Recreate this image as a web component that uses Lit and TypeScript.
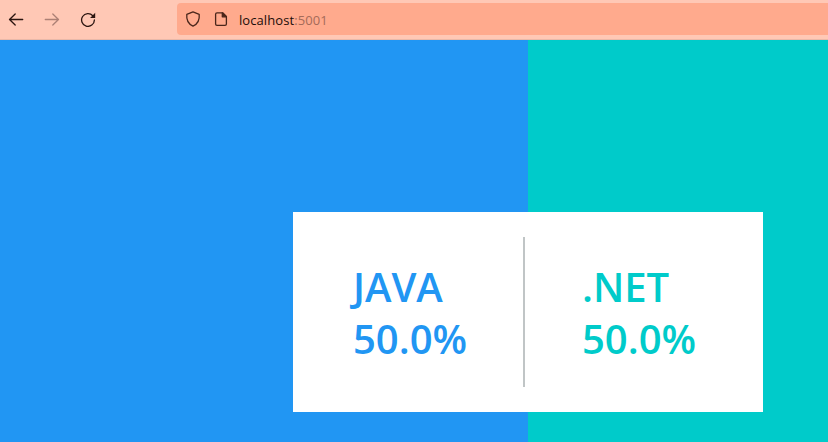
import { LitElement, html, css } from "lit";
import { customElement, property } from "lit/decorators.js";

@customElement("browser-bar")
class BrowserBar extends LitElement {
  static styles = css`
    :host {
      display: flex;
      height: 40px;
      box-sizing: border-box;
      padding: 3px 0 4px 8px;
      background: #ffc8b5;
      border-bottom: 1px solid #e9b8a8;
      align-items: stretch;
    }
    .nav {
      display: flex;
      align-items: center;
      gap: 20px;
      width: 169px;
      flex: none;
      color: #2b1510;
    }
    svg {
      width: 16px;
      height: 16px;
      display: block;
      flex: none;
      fill: none;
      stroke: currentColor;
      stroke-width: 1.3;
      stroke-linecap: round;
      stroke-linejoin: round;
    }
    .disabled {
      color: #ac8075;
    }
    .reload-tip {
      fill: currentColor;
      stroke: none;
    }
    .address {
      flex: 1;
      display: flex;
      align-items: center;
      padding-left: 8px;
      background: #ffaa8d;
      border-radius: 4px 0 0 4px;
      color: #4a261b;
    }
    .page {
      margin-left: 12px;
    }
    .url {
      margin-left: 10px;
      padding-top: 2px;
      font: 400 13px/20px "Open Sans", sans-serif;
      letter-spacing: 0.08px;
      color: #1c0d09;
      white-space: nowrap;
    }
    .port {
      color: #a56b59;
    }
  `;

  render() {
    return html`
      <div class="nav">
        <svg viewBox="0 0 16 16"><path d="M14.7 8.5H1.5M7.2 3L1.5 8.5L7.2 14" /></svg>
        <svg class="disabled" viewBox="0 0 16 16"><path d="M1.3 8.5H14.5M8.8 3L14.5 8.5L8.8 14" /></svg>
        <svg viewBox="0 0 16 16">
          <path d="M12.8 4.7A6.4 6.4 0 1 0 14.4 9" />
          <path class="reload-tip" d="M15.2 1.8V6.9H10.1Z" />
        </svg>
      </div>
      <div class="address">
        <svg viewBox="0 0 16 16">
          <path d="M8 .9L14.2 3.3C14.8 9 12.4 13.2 8 15.1C3.6 13.2 1.2 9 1.8 3.3Z" />
        </svg>
        <svg class="page" viewBox="0 0 16 16">
          <path d="M9.7 1.8H4A1.4 1.4 0 0 0 2.6 3.2V13A1.4 1.4 0 0 0 4 14.4H12A1.4 1.4 0 0 0 13.4 13V5.5Z" />
          <path d="M9.3 2V5.8H13.2Z" fill="currentColor" />
        </svg>
        <span class="url">localhost<span class="port">:5001</span></span>
      </div>
    `;
  }
}

@customElement("vote-choice")
class VoteChoice extends LitElement {
  @property() label = "";
  @property() share = "";

  static styles = css`
    :host {
      display: block;
      font: 600 40px/52px "Open Sans", sans-serif;
      white-space: nowrap;
    }
  `;

  render() {
    return html`<div>${this.label}</div><div>${this.share}</div>`;
  }
}

@customElement("app-root")
class AppRoot extends LitElement {
  static styles = css`
    :host {
      display: block;
      width: 828px;
      height: 442px;
      overflow: hidden;
    }
    .result {
      box-sizing: border-box;
      height: 402px;
      padding: 172px 0 30px 293px;
      background: linear-gradient(to right, #2196f3 528px, #00cbca 528px);
    }
    .card {
      box-sizing: border-box;
      width: 470px;
      height: 200px;
      padding: 25px 0;
      display: flex;
      background: #fff;
    }
    .choice {
      box-sizing: border-box;
      padding: 24px 0 0 60px;
    }
    .java {
      width: 230px;
      color: #2196f3;
    }
    .net {
      padding-left: 57px;
      color: #00cbca;
    }
    .divider {
      width: 2px;
      background: #c0c5c6;
    }
  `;

  render() {
    return html`
      <browser-bar></browser-bar>
      <main class="result">
        <section class="card">
          <vote-choice class="choice java" label="JAVA" share="50.0%"></vote-choice>
          <div class="divider"></div>
          <vote-choice class="choice net" label=".NET" share="50.0%"></vote-choice>
        </section>
      </main>
    `;
  }
}
